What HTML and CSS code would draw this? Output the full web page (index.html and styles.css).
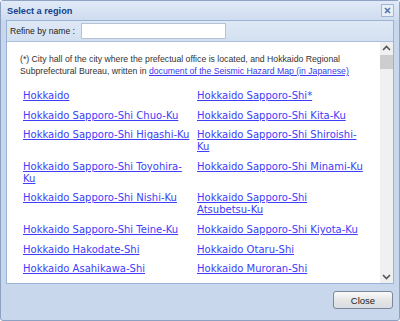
FILE: index.html
```html
<!DOCTYPE html>
<html lang="en">
<head>
    <meta charset="UTF-8">
    <title>Select a region</title>
    <link rel="stylesheet" href="styles.css">
</head>
<body>
    <div class="window">
        <div class="header">
            <span class="title">Select a region</span>
            <span class="tool-close">
                <svg width="11" height="11" viewBox="0 0 11 11"><path d="M3 3 L8 8 M8 3 L3 8" stroke="#4f73a8" stroke-width="1.6" fill="none"/></svg>
            </span>
        </div>
        <div class="panel">
            <div class="toolbar">
                <label for="refine">Refine by name :</label>
                <input type="text" id="refine">
            </div>
            <div class="body">
                <div class="content">
                    <p class="note">(*) City hall of the city where the prefectual office is located, and Hokkaido Regional Subprefectural Bureau, written in <a href="#">document of the Seismic Hazard Map (in Japanese)</a></p>
                    <div class="regions">
                        <a href="#">Hokkaido</a>
                        <a href="#">Hokkaido Sapporo-Shi*</a>
                        <a href="#">Hokkaido Sapporo-Shi Chuo-Ku</a>
                        <a href="#">Hokkaido Sapporo-Shi Kita-Ku</a>
                        <a href="#">Hokkaido Sapporo-Shi Higashi-Ku</a>
                        <a href="#">Hokkaido Sapporo-Shi Shiroishi-Ku</a>
                        <a href="#">Hokkaido Sapporo-Shi Toyohira-Ku</a>
                        <a href="#">Hokkaido Sapporo-Shi Minami-Ku</a>
                        <a href="#">Hokkaido Sapporo-Shi Nishi-Ku</a>
                        <a href="#">Hokkaido Sapporo-Shi <span class="nowrap">Atsubetsu-Ku</span></a>
                        <a href="#">Hokkaido Sapporo-Shi Teine-Ku</a>
                        <a href="#">Hokkaido Sapporo-Shi Kiyota-Ku</a>
                        <a href="#">Hokkaido Hakodate-Shi</a>
                        <a href="#">Hokkaido Otaru-Shi</a>
                        <a href="#">Hokkaido Asahikawa-Shi</a>
                        <a href="#">Hokkaido Muroran-Shi</a>
                    </div>
                </div>
                <div class="scrollbar">
                    <div class="arrow">
                        <svg width="9" height="6" viewBox="0 0 9 6"><path d="M1 5 L4.5 1.5 L8 5" stroke="#555" stroke-width="1.6" fill="none"/></svg>
                    </div>
                    <div class="thumb"></div>
                    <div class="track"></div>
                    <div class="arrow">
                        <svg width="9" height="6" viewBox="0 0 9 6"><path d="M1 1 L4.5 4.5 L8 1" stroke="#555" stroke-width="1.6" fill="none"/></svg>
                    </div>
                </div>
            </div>
        </div>
        <div class="footer">
            <button type="button">Close</button>
        </div>
    </div>
</body>
</html>
```

FILE: styles.css
```css
body {
    margin: 0;
    padding: 0;
    background-color: #ffffff;
    font-family: "Liberation Sans", Arial, sans-serif;
}
.window {
    width: 398px;
    height: 319px;
    border: 1px solid #8da2c2;
    border-radius: 3px;
    background-color: #c8d7ec;
    display: flex;
    flex-direction: column;
}
.header {
    height: 19px;
    flex: none;
    display: flex;
    align-items: center;
    justify-content: space-between;
    padding: 0 5px 0 6px;
    background: linear-gradient(#e1eaf7, #cfdcef);
}
.title {
    font-weight: bold;
    font-size: 9.2px;
    color: #15428b;
}
.tool-close {
    width: 11px;
    height: 11px;
    border: 1px solid #9fb6d6;
    background-color: #e9eff8;
    display: flex;
}
.panel {
    flex: 1;
    min-height: 0;
    overflow: hidden;
    margin: 0 5px 0 5px;
    border: 1px solid #99b3d6;
    display: flex;
    flex-direction: column;
}
.toolbar {
    height: 20px;
    flex: none;
    display: flex;
    align-items: center;
    gap: 6px;
    padding-left: 3px;
    background: linear-gradient(#dfe8f5, #d3e0f1);
    border-bottom: 1px solid #a9bfdd;
}
label {
    font-size: 8.6px;
    color: #222;
}
input {
    width: 139px;
    height: 14px;
    padding: 0 2px;
    border: 1px solid #b5c3d6;
    background-color: #fff;
    box-sizing: content-box;
}
.body {
    flex: 1;
    min-height: 0;
    display: flex;
    background-color: #fff;
    overflow: hidden;
}
.content {
    flex: 1;
    overflow: hidden;
    padding: 11px 0 0 13px;
}
.note {
    margin: 0 18px 13px 0;
    font-size: 8.7px;
    line-height: 12px;
    color: #333;
}
.note a {
    color: #3a3aee;
}
.regions {
    display: grid;
    grid-template-columns: 170px 170px;
    column-gap: 4px;
    row-gap: 7.6px;
    margin-left: 3px;
}
.regions a {
    font-family: "DejaVu Sans", sans-serif;
    font-size: 10px;
    line-height: 12px;
    color: #3d3dfa;
}
.nowrap {
    white-space: nowrap;
}
.scrollbar {
    width: 13px;
    background-color: #f0f0f0;
    display: flex;
    flex-direction: column;
}
.arrow {
    height: 12px;
    display: flex;
    align-items: center;
    justify-content: center;
}
.thumb {
    height: 14px;
    margin: 1px 0 0 0;
    background-color: #cdcdcd;
}
.track {
    flex: 1;
}
.footer {
    height: 36px;
    flex: none;
    display: flex;
    justify-content: flex-end;
    padding: 7px 6px 0 0;
    box-sizing: border-box;
}
button {
    width: 60px;
    height: 18px;
    font-family: "Liberation Sans", Arial, sans-serif;
    font-size: 9.5px;
    color: #222;
    border: 1px solid #7a8799;
    border-radius: 3px;
    background: linear-gradient(#fbfbfb, #e6e6e6 50%, #d9dde3);
}
```
